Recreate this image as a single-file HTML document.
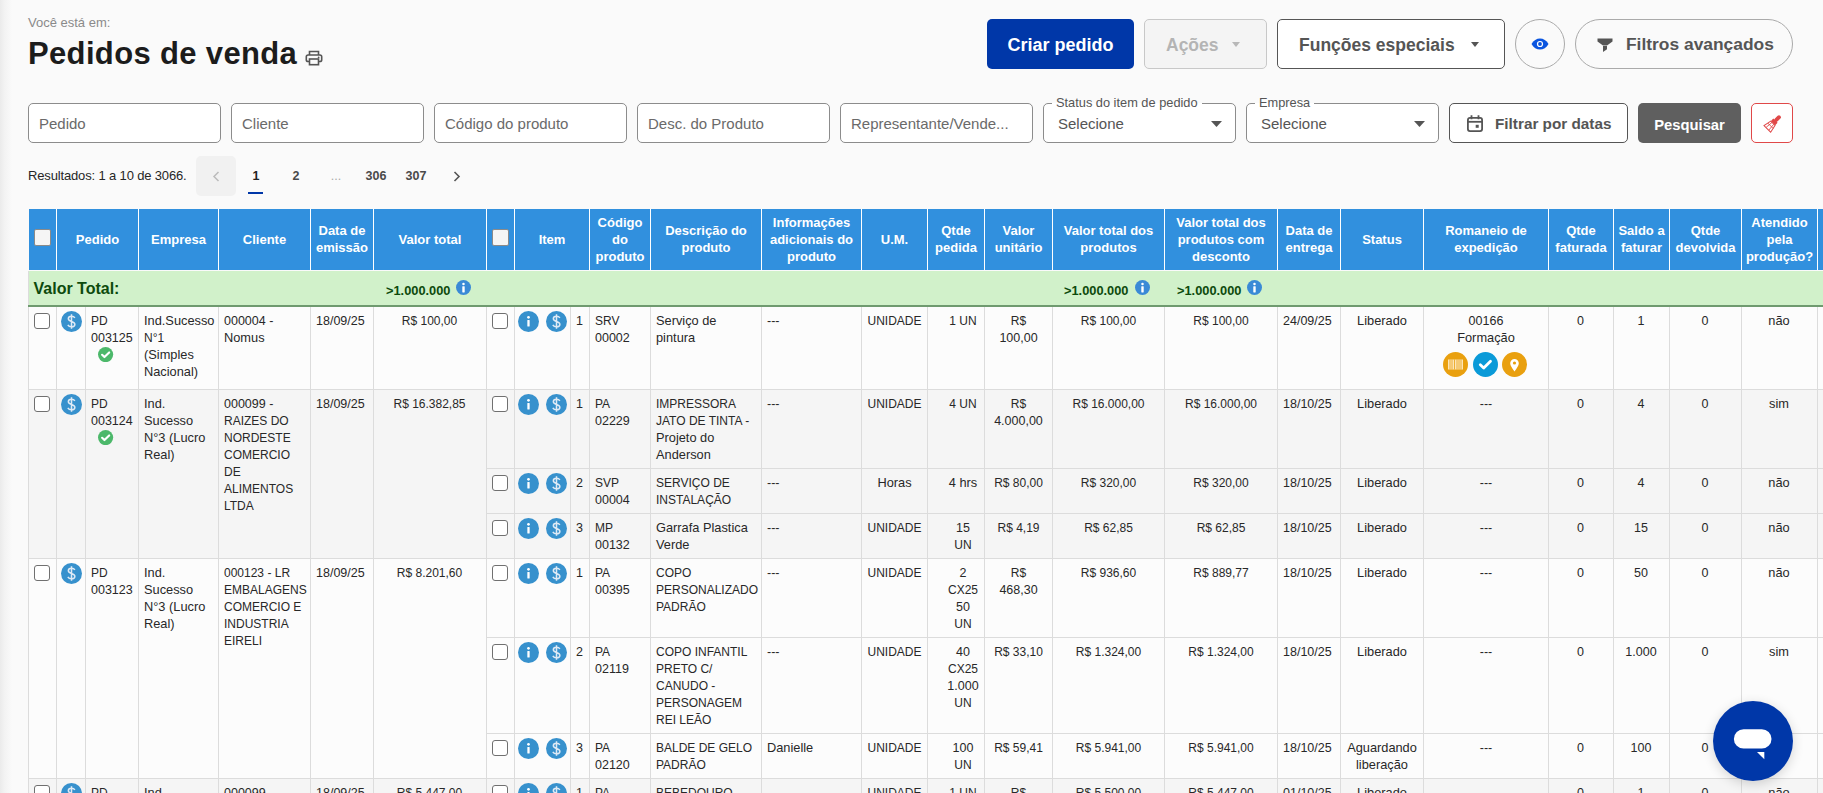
<!DOCTYPE html><html lang="pt"><head><meta charset="utf-8"><title>Pedidos de venda</title><style>
*{box-sizing:border-box}
html,body{margin:0;padding:0}
body{width:1823px;height:793px;overflow:hidden;background:#fafafa;font-family:"Liberation Sans",sans-serif;color:#333;position:relative}
.a{position:absolute}
.t{position:absolute;white-space:nowrap;font-size:12.5px;line-height:17px;color:#282828}
.u{font-size:12px}
.l{font-size:12.8px;position:relative;top:-1px}
.c{text-align:center}
.hd{position:absolute;white-space:nowrap;font-size:13px;line-height:17px;color:#fff;font-weight:bold;text-align:center;display:flex;align-items:center;justify-content:center;top:208.8px;height:61px}
.vl{position:absolute;width:1px;background:#dcdcdc}
.hl{position:absolute;height:1px;background:#dcdcdc}
.cb{position:absolute;width:16px;height:16px;border:1.5px solid #707070;border-radius:3px;background:#fff}
.btn{position:absolute;border-radius:5px;font-weight:bold;white-space:nowrap;display:flex;align-items:center}
.inp{position:absolute;top:103px;height:40px;border:1px solid #8c8c8c;border-radius:5px;background:#fff;font-size:15px;color:#6a6a6a;padding-left:10px;padding-top:0;display:flex;align-items:center;white-space:nowrap}
.pg{position:absolute;top:156px;width:40px;height:40px;display:flex;align-items:center;justify-content:center;font-size:12.5px;font-weight:bold;color:#4a4a4a}
</style></head><body>
<div class="a" style="left:0;top:0;width:12px;height:793px;background:linear-gradient(to right,#ebebeb,#f3f3f3 40%,#fafafa)"></div>
<div class="t" style="left:28px;top:15px;font-size:13px;line-height:16px;color:#8a8a8a">Você está em:</div>
<div class="t" style="left:28px;top:36px;font-size:31px;line-height:36px;color:#1c1c1c;font-weight:bold;letter-spacing:0.35px">Pedidos de venda</div>
<svg class="a" style="left:305px;top:50px" width="18" height="16" viewBox="0 0 18 16"><path d="M4.5 5V1.5h9V5" fill="none" stroke="#555" stroke-width="1.6"/><rect x="1.3" y="5" width="15.4" height="6.5" rx="1.8" fill="none" stroke="#555" stroke-width="1.6"/><rect x="4.5" y="9" width="9" height="5.7" fill="#fafafa" stroke="#555" stroke-width="1.6"/><circle cx="13.6" cy="7.4" r="0.9" fill="#555"/></svg>
<div class="btn" style="left:987px;top:19px;width:147px;height:50px;background:#0037a8;color:#fff;font-size:18px;justify-content:center;padding-top:2px">Criar pedido</div>
<div class="btn" style="left:1144px;top:19px;width:123px;height:50px;background:#f4f4f4;border:1px solid #c8c8c8;color:#b4b4b4;font-size:17.5px;padding-left:21px;padding-top:2px">Ações<svg style="margin-left:13px;margin-top:-2px" width="8" height="5" viewBox="0 0 8 5"><path d="M0 0h8L4 5z" fill="#b8b8b8"/></svg></div>
<div class="btn" style="left:1277px;top:19px;width:228px;height:50px;background:#fff;border:1.5px solid #555;color:#555;font-size:17.5px;padding-left:21px;padding-top:2px">Funções especiais<svg style="margin-left:16px;margin-top:-2px" width="8" height="5" viewBox="0 0 8 5"><path d="M0 0h8L4 5z" fill="#555"/></svg></div>
<div class="a" style="left:1515px;top:19px;width:50px;height:50px;border:1px solid #aaa;border-radius:50%;background:#fafafa"></div>
<svg class="a" style="left:1531px;top:38px" width="18" height="12" viewBox="0 0 18 12"><path d="M0.5 6C2.6 2.2 5.6 0.4 9 0.4S15.4 2.2 17.5 6C15.4 9.8 12.4 11.6 9 11.6S2.6 9.8 0.5 6z" fill="#0a55e0"/><circle cx="9" cy="6" r="3.1" fill="#fff"/><circle cx="9" cy="6" r="1.9" fill="#0a55e0"/></svg>
<div class="btn" style="left:1575px;top:19px;width:218px;height:50px;background:#fafafa;border:1px solid #aaa;border-radius:25px;color:#555;font-size:17.4px;padding-left:50px;padding-top:1px">Filtros avançados</div>
<svg class="a" style="left:1597px;top:38px" width="16" height="14" viewBox="0 0 16 14"><path d="M0.5 0.5h15v3L10 7.5v0H6v0L0.5 3.5z" fill="#555"/><path d="M6 8h4v3.2L6 14z" fill="#555"/></svg>
<div class="inp" style="left:28px;width:193px">Pedido</div>
<div class="inp" style="left:231px;width:193px">Cliente</div>
<div class="inp" style="left:434px;width:193px">Código do produto</div>
<div class="inp" style="left:637px;width:193px">Desc. do Produto</div>
<div class="inp" style="left:840px;width:193px">Representante/Vende...</div>
<div class="inp" style="left:1043px;width:193px;color:#555;padding-left:14px">Selecione<svg class="a" style="left:167px;top:17px" width="11" height="6" viewBox="0 0 11 6"><path d="M0 0h11L5.5 6z" fill="#555"/></svg></div>
<div class="t" style="left:1052px;top:94.8px;font-size:12.8px;line-height:15px;color:#555;background:linear-gradient(#fafafa 0,#fafafa 8.5px,#fff 8.5px);padding:0 4px">Status do item de pedido</div>
<div class="inp" style="left:1246px;width:193px;color:#555;padding-left:14px">Selecione<svg class="a" style="left:167px;top:17px" width="11" height="6" viewBox="0 0 11 6"><path d="M0 0h11L5.5 6z" fill="#555"/></svg></div>
<div class="t" style="left:1255px;top:94.8px;font-size:12.8px;line-height:15px;color:#555;background:linear-gradient(#fafafa 0,#fafafa 8.5px,#fff 8.5px);padding:0 4px">Empresa</div>
<div class="btn" style="left:1449px;top:103px;width:179px;height:40px;background:#fff;border:1.5px solid #555;color:#555;font-size:15.3px;padding-left:45px;padding-top:2px">Filtrar por datas</div>
<svg class="a" style="left:1467px;top:115px" width="16" height="17" viewBox="0 0 16 17"><rect x="0.9" y="2.9" width="14.2" height="13.2" rx="2" fill="none" stroke="#555" stroke-width="1.8"/><path d="M1 6.8h14" stroke="#555" stroke-width="1.8"/><path d="M4.5 0.3v4M11.5 0.3v4" stroke="#555" stroke-width="1.8"/><rect x="8.7" y="9.8" width="3" height="3" fill="#555"/></svg>
<div class="btn" style="left:1638px;top:103px;width:103px;height:40px;background:#5f5f5f;color:#fff;font-size:14.8px;justify-content:center;padding-top:4px">Pesquisar</div>
<div class="a" style="left:1751px;top:103px;width:42px;height:40px;border:1px solid #e04848;border-radius:5px;background:#fff"></div>
<svg class="a" style="left:1752px;top:104px" width="40" height="38" viewBox="0 0 40 38"><g transform="translate(20.6 19.6) rotate(45) scale(0.84)"><rect x="-2.3" y="-13" width="4.6" height="9" rx="2.2" fill="#e04848"/><rect x="-3.6" y="-5" width="7.2" height="4" rx="0.6" fill="#e04848"/><path d="M-3.6 -0.6h7.2l2 9.5h-11.2z" fill="none" stroke="#e04848" stroke-width="1.2"/><path d="M-1.5 -0.5l-0.8 9M1.5 -0.5l0.8 9M-4.6 3.6h9.2" stroke="#e04848" stroke-width="1"/></g></svg>
<div class="t" style="left:28px;top:167px;font-size:13px;line-height:17px;color:#262626;letter-spacing:-0.15px">Resultados: 1 a 10 de 3066.</div>
<div class="a" style="left:196px;top:156px;width:40px;height:40px;border-radius:5px;background:#f1f1f1"></div>
<svg class="a" style="left:212px;top:171px" width="8" height="11" viewBox="0 0 8 11"><path d="M6.5 1L2 5.5 6.5 10" fill="none" stroke="#bbb" stroke-width="1.5"/></svg>
<div class="pg" style="left:236px;color:#222">1</div>
<div class="pg" style="left:276px;color:#4a4a4a">2</div>
<div class="pg" style="left:356px;color:#4a4a4a">306</div>
<div class="pg" style="left:396px;color:#4a4a4a">307</div>
<div class="pg" style="left:316px;color:#aaa;font-weight:normal">...</div>
<div class="a" style="left:248px;top:192px;width:15px;height:2px;background:#0037a8"></div>
<svg class="a" style="left:453px;top:171px" width="8" height="11" viewBox="0 0 8 11"><path d="M1.5 1L6 5.5 1.5 10" fill="none" stroke="#555" stroke-width="1.6"/></svg>
<div class="a" style="left:29px;top:209px;width:1794px;height:61px;background:#3190de"></div>
<div class="a" style="left:56px;top:209px;width:1px;height:61px;background:#fff"></div>
<div class="a" style="left:138px;top:209px;width:1px;height:61px;background:#fff"></div>
<div class="a" style="left:218px;top:209px;width:1px;height:61px;background:#fff"></div>
<div class="a" style="left:310px;top:209px;width:1px;height:61px;background:#fff"></div>
<div class="a" style="left:373px;top:209px;width:1px;height:61px;background:#fff"></div>
<div class="a" style="left:486px;top:209px;width:1px;height:61px;background:#fff"></div>
<div class="a" style="left:514px;top:209px;width:1px;height:61px;background:#fff"></div>
<div class="a" style="left:589px;top:209px;width:1px;height:61px;background:#fff"></div>
<div class="a" style="left:650px;top:209px;width:1px;height:61px;background:#fff"></div>
<div class="a" style="left:761px;top:209px;width:1px;height:61px;background:#fff"></div>
<div class="a" style="left:861px;top:209px;width:1px;height:61px;background:#fff"></div>
<div class="a" style="left:927px;top:209px;width:1px;height:61px;background:#fff"></div>
<div class="a" style="left:984px;top:209px;width:1px;height:61px;background:#fff"></div>
<div class="a" style="left:1052px;top:209px;width:1px;height:61px;background:#fff"></div>
<div class="a" style="left:1164px;top:209px;width:1px;height:61px;background:#fff"></div>
<div class="a" style="left:1277px;top:209px;width:1px;height:61px;background:#fff"></div>
<div class="a" style="left:1340px;top:209px;width:1px;height:61px;background:#fff"></div>
<div class="a" style="left:1423px;top:209px;width:1px;height:61px;background:#fff"></div>
<div class="a" style="left:1548px;top:209px;width:1px;height:61px;background:#fff"></div>
<div class="a" style="left:1613px;top:209px;width:1px;height:61px;background:#fff"></div>
<div class="a" style="left:1669px;top:209px;width:1px;height:61px;background:#fff"></div>
<div class="a" style="left:1741px;top:209px;width:1px;height:61px;background:#fff"></div>
<div class="a" style="left:1817px;top:209px;width:1px;height:61px;background:#fff"></div>
<div class="hd" style="left:57px;width:81px">Pedido</div>
<div class="hd" style="left:139px;width:79px">Empresa</div>
<div class="hd" style="left:219px;width:91px">Cliente</div>
<div class="hd" style="left:311px;width:62px">Data de<br>emissão</div>
<div class="hd" style="left:374px;width:112px">Valor total</div>
<div class="hd" style="left:515px;width:74px">Item</div>
<div class="hd" style="left:590px;width:60px">Código<br>do<br>produto</div>
<div class="hd" style="left:651px;width:110px">Descrição do<br>produto</div>
<div class="hd" style="left:762px;width:99px">Informações<br>adicionais do<br>produto</div>
<div class="hd" style="left:862px;width:65px">U.M.</div>
<div class="hd" style="left:928px;width:56px">Qtde<br>pedida</div>
<div class="hd" style="left:985px;width:67px">Valor<br>unitário</div>
<div class="hd" style="left:1053px;width:111px">Valor total dos<br>produtos</div>
<div class="hd" style="left:1165px;width:112px">Valor total dos<br>produtos com<br>desconto</div>
<div class="hd" style="left:1278px;width:62px">Data de<br>entrega</div>
<div class="hd" style="left:1341px;width:82px">Status</div>
<div class="hd" style="left:1424px;width:124px">Romaneio de<br>expedição</div>
<div class="hd" style="left:1549px;width:64px">Qtde<br>faturada</div>
<div class="hd" style="left:1614px;width:55px">Saldo a<br>faturar</div>
<div class="hd" style="left:1670px;width:71px">Qtde<br>devolvida</div>
<div class="hd" style="left:1742px;width:75px">Atendido<br>pela<br>produção?</div>
<div class="a" style="left:34px;top:229px;width:17px;height:17px;border:1.5px solid #8a8a8a;border-radius:2px;background:#f5f5f5"></div>
<div class="a" style="left:492px;top:229px;width:17px;height:17px;border:1.5px solid #8a8a8a;border-radius:2px;background:#f5f5f5"></div>
<div class="a" style="left:28px;top:271px;width:1795px;height:34px;background:#d1f1ca"></div>
<div class="a" style="left:28px;top:271px;width:1px;height:34px;background:#dcdcdc"></div>
<div class="a" style="left:28px;top:305px;width:1795px;height:2px;background:#6f9a6f"></div>
<div class="t" style="left:33.5px;top:280px;font-size:16px;line-height:18px;color:#0d4a0d;font-weight:bold">Valor Total:</div>
<div class="t" style="left:386px;top:282px;font-weight:bold;color:#0d4a0d;font-size:12.8px">&gt;1.000.000</div>
<svg class="a" style="left:456.0px;top:280.0px" width="15.0" height="15.0" viewBox="0 0 20 20"><circle cx="10" cy="10" r="10" fill="#3a8ad6"/><circle cx="10" cy="5.2" r="1.7" fill="#fff"/><rect x="8.4" y="8.2" width="3.2" height="8.3" rx="0.6" fill="#fff"/></svg>
<div class="t" style="left:1064px;top:282px;font-weight:bold;color:#0d4a0d;font-size:12.8px">&gt;1.000.000</div>
<svg class="a" style="left:1134.5px;top:280.0px" width="15.0" height="15.0" viewBox="0 0 20 20"><circle cx="10" cy="10" r="10" fill="#3a8ad6"/><circle cx="10" cy="5.2" r="1.7" fill="#fff"/><rect x="8.4" y="8.2" width="3.2" height="8.3" rx="0.6" fill="#fff"/></svg>
<div class="t" style="left:1177px;top:282px;font-weight:bold;color:#0d4a0d;font-size:12.8px">&gt;1.000.000</div>
<svg class="a" style="left:1246.5px;top:280.0px" width="15.0" height="15.0" viewBox="0 0 20 20"><circle cx="10" cy="10" r="10" fill="#3a8ad6"/><circle cx="10" cy="5.2" r="1.7" fill="#fff"/><rect x="8.4" y="8.2" width="3.2" height="8.3" rx="0.6" fill="#fff"/></svg>
<div class="a" style="left:28px;top:307px;width:1795px;height:82px;background:#fcfcfc"></div>
<div class="cb" style="left:34px;top:313px"></div>
<svg class="a" style="left:60.5px;top:310.5px" width="21.0" height="21.0" viewBox="0 0 20 20"><circle cx="10" cy="10" r="10" fill="#3791cd"/><path d="M13.2 6.6c-0.6-1-1.7-1.5-3.2-1.5-1.8 0-3 0.9-3 2.3 0 1.5 1.3 2 3 2.5s3.2 1 3.2 2.7c0 1.5-1.3 2.5-3.2 2.5-1.6 0-2.8-0.6-3.5-1.8M10 3.2v13.6" fill="none" stroke="#dfeaf5" stroke-width="1.45"/></svg>
<div class="t" style="left:91px;top:313px;"><div class="u">PD</div><div>003125</div></div>
<svg class="a" style="left:98.4px;top:347.1px" width="15.2" height="15.2" viewBox="0 0 20 20"><circle cx="10" cy="10" r="10" fill="#4cb86a"/><path d="M5.4 10.3l3.1 3 6.2-6.2" fill="none" stroke="#fff" stroke-width="2.8" stroke-linecap="round" stroke-linejoin="round"/></svg>
<div class="t" style="left:144px;top:313px;"><div class="l">Ind.Sucesso</div><div class="u">N°1</div><div class="l">(Simples</div><div class="l">Nacional)</div></div>
<div class="t" style="left:224px;top:313px;"><div>000004 -</div><div class="l">Nomus</div></div>
<div class="t" style="left:316px;top:313px;"><div>18/09/25</div></div>
<div class="t c" style="left:359.5px;top:313px;width:140px;"><div class="u">R$ 100,00</div></div>
<div class="cb" style="left:492px;top:313px"></div>
<svg class="a" style="left:518.2px;top:310.5px" width="21.0" height="21.0" viewBox="0 0 20 20"><circle cx="10" cy="10" r="10" fill="#3791cd"/><circle cx="10" cy="6" r="1.3" fill="#fff"/><rect x="8.9" y="8.6" width="2.2" height="6.2" rx="0.5" fill="#fff"/></svg>
<svg class="a" style="left:545.7px;top:310.5px" width="21.0" height="21.0" viewBox="0 0 20 20"><circle cx="10" cy="10" r="10" fill="#3791cd"/><path d="M13.2 6.6c-0.6-1-1.7-1.5-3.2-1.5-1.8 0-3 0.9-3 2.3 0 1.5 1.3 2 3 2.5s3.2 1 3.2 2.7c0 1.5-1.3 2.5-3.2 2.5-1.6 0-2.8-0.6-3.5-1.8M10 3.2v13.6" fill="none" stroke="#dfeaf5" stroke-width="1.45"/></svg>
<div class="t c" style="left:570.0px;top:313px;width:19px;"><div>1</div></div>
<div class="t" style="left:595px;top:313px;"><div class="u">SRV</div><div>00002</div></div>
<div class="t" style="left:656px;top:313px;"><div class="l">Serviço de</div><div class="l">pintura</div></div>
<div class="t" style="left:767px;top:313px;"><div>---</div></div>
<div class="t c" style="left:824.5px;top:313px;width:140px;"><div class="u">UNIDADE</div></div>
<div class="t c" style="left:933.0px;top:313px;width:60px;"><div class="u">1 UN</div></div>
<div class="t c" style="left:948.5px;top:313px;width:140px;"><div class="u">R$</div><div>100,00</div></div>
<div class="t c" style="left:1038.5px;top:313px;width:140px;"><div class="u">R$ 100,00</div></div>
<div class="t c" style="left:1151.0px;top:313px;width:140px;"><div class="u">R$ 100,00</div></div>
<div class="t" style="left:1283px;top:313px;"><div>24/09/25</div></div>
<div class="t c" style="left:1312.0px;top:313px;width:140px;"><div class="l">Liberado</div></div>
<div class="t c" style="left:1416.0px;top:313px;width:140px;"><div>00166</div><div class="l">Formação</div></div>
<svg class="a" style="left:1442.8px;top:351.9px" width="25" height="25" viewBox="0 0 25 25"><circle cx="12.5" cy="12.5" r="12.5" fill="#e9a00f"/><rect x="5" y="7.5" width="15" height="10" fill="#fde6b8"/><path d="M7 7.5v10M9 7.5v10M11.5 7.5v10M14 7.5v10M16 7.5v10M18 7.5v10" stroke="#e9a00f" stroke-width="0.8"/></svg>
<svg class="a" style="left:1472.9px;top:351.9px" width="25" height="25" viewBox="0 0 25 25"><circle cx="12.5" cy="12.5" r="12.5" fill="#0a9ad8"/><path d="M7.3 12.8l3.4 3.3 6.8-6.9" fill="none" stroke="#fff" stroke-width="2.8" stroke-linecap="round" stroke-linejoin="round"/></svg>
<svg class="a" style="left:1501.9px;top:351.9px" width="25" height="25" viewBox="0 0 25 25"><circle cx="12.5" cy="12.5" r="12.5" fill="#e9a00f"/><path d="M12.5 19.5c-2.6-3.6-4.3-6-4.3-8.2a4.3 4.3 0 0 1 8.6 0c0 2.2-1.7 4.6-4.3 8.2z" fill="#fff"/><circle cx="12.5" cy="11" r="1.6" fill="#e9a00f"/></svg>
<div class="t c" style="left:1550.5px;top:313px;width:60px;"><div>0</div></div>
<div class="t c" style="left:1613.0px;top:313px;width:56px;"><div>1</div></div>
<div class="t c" style="left:1670.0px;top:313px;width:70px;"><div>0</div></div>
<div class="t c" style="left:1741.0px;top:313px;width:76px;"><div class="l">não</div></div>
<div class="hl" style="left:28px;top:389px;width:1795px"></div>
<div class="a" style="left:28px;top:390px;width:1795px;height:168px;background:#f5f5f5"></div>
<div class="cb" style="left:34px;top:396px"></div>
<svg class="a" style="left:60.5px;top:393.5px" width="21.0" height="21.0" viewBox="0 0 20 20"><circle cx="10" cy="10" r="10" fill="#3791cd"/><path d="M13.2 6.6c-0.6-1-1.7-1.5-3.2-1.5-1.8 0-3 0.9-3 2.3 0 1.5 1.3 2 3 2.5s3.2 1 3.2 2.7c0 1.5-1.3 2.5-3.2 2.5-1.6 0-2.8-0.6-3.5-1.8M10 3.2v13.6" fill="none" stroke="#dfeaf5" stroke-width="1.45"/></svg>
<div class="t" style="left:91px;top:396px;"><div class="u">PD</div><div>003124</div></div>
<svg class="a" style="left:98.4px;top:430.1px" width="15.2" height="15.2" viewBox="0 0 20 20"><circle cx="10" cy="10" r="10" fill="#4cb86a"/><path d="M5.4 10.3l3.1 3 6.2-6.2" fill="none" stroke="#fff" stroke-width="2.8" stroke-linecap="round" stroke-linejoin="round"/></svg>
<div class="t" style="left:144px;top:396px;"><div class="l">Ind.</div><div class="l">Sucesso</div><div class="l">N°3 (Lucro</div><div class="l">Real)</div></div>
<div class="t" style="left:224px;top:396px;"><div>000099 -</div><div class="u">RAIZES DO</div><div class="u">NORDESTE</div><div class="u">COMERCIO</div><div class="u">DE</div><div class="u">ALIMENTOS</div><div class="u">LTDA</div></div>
<div class="t" style="left:316px;top:396px;"><div>18/09/25</div></div>
<div class="t c" style="left:359.5px;top:396px;width:140px;"><div class="u">R$ 16.382,85</div></div>
<div class="cb" style="left:492px;top:396px"></div>
<svg class="a" style="left:518.2px;top:393.5px" width="21.0" height="21.0" viewBox="0 0 20 20"><circle cx="10" cy="10" r="10" fill="#3791cd"/><circle cx="10" cy="6" r="1.3" fill="#fff"/><rect x="8.9" y="8.6" width="2.2" height="6.2" rx="0.5" fill="#fff"/></svg>
<svg class="a" style="left:545.7px;top:393.5px" width="21.0" height="21.0" viewBox="0 0 20 20"><circle cx="10" cy="10" r="10" fill="#3791cd"/><path d="M13.2 6.6c-0.6-1-1.7-1.5-3.2-1.5-1.8 0-3 0.9-3 2.3 0 1.5 1.3 2 3 2.5s3.2 1 3.2 2.7c0 1.5-1.3 2.5-3.2 2.5-1.6 0-2.8-0.6-3.5-1.8M10 3.2v13.6" fill="none" stroke="#dfeaf5" stroke-width="1.45"/></svg>
<div class="t c" style="left:570.0px;top:396px;width:19px;"><div>1</div></div>
<div class="t" style="left:595px;top:396px;"><div class="u">PA</div><div>02229</div></div>
<div class="t" style="left:656px;top:396px;"><div class="u">IMPRESSORA</div><div class="u">JATO DE TINTA -</div><div class="l">Projeto do</div><div class="l">Anderson</div></div>
<div class="t" style="left:767px;top:396px;"><div>---</div></div>
<div class="t c" style="left:824.5px;top:396px;width:140px;"><div class="u">UNIDADE</div></div>
<div class="t c" style="left:933.0px;top:396px;width:60px;"><div class="u">4 UN</div></div>
<div class="t c" style="left:948.5px;top:396px;width:140px;"><div class="u">R$</div><div>4.000,00</div></div>
<div class="t c" style="left:1038.5px;top:396px;width:140px;"><div class="u">R$ 16.000,00</div></div>
<div class="t c" style="left:1151.0px;top:396px;width:140px;"><div class="u">R$ 16.000,00</div></div>
<div class="t" style="left:1283px;top:396px;"><div>18/10/25</div></div>
<div class="t c" style="left:1312.0px;top:396px;width:140px;"><div class="l">Liberado</div></div>
<div class="t c" style="left:1416.0px;top:396px;width:140px;"><div>---</div></div>
<div class="t c" style="left:1550.5px;top:396px;width:60px;"><div>0</div></div>
<div class="t c" style="left:1613.0px;top:396px;width:56px;"><div>4</div></div>
<div class="t c" style="left:1670.0px;top:396px;width:70px;"><div>0</div></div>
<div class="t c" style="left:1741.0px;top:396px;width:76px;"><div class="l">sim</div></div>
<div class="hl" style="left:486px;top:468px;width:1337px"></div>
<div class="cb" style="left:492px;top:475px"></div>
<svg class="a" style="left:518.2px;top:472.5px" width="21.0" height="21.0" viewBox="0 0 20 20"><circle cx="10" cy="10" r="10" fill="#3791cd"/><circle cx="10" cy="6" r="1.3" fill="#fff"/><rect x="8.9" y="8.6" width="2.2" height="6.2" rx="0.5" fill="#fff"/></svg>
<svg class="a" style="left:545.7px;top:472.5px" width="21.0" height="21.0" viewBox="0 0 20 20"><circle cx="10" cy="10" r="10" fill="#3791cd"/><path d="M13.2 6.6c-0.6-1-1.7-1.5-3.2-1.5-1.8 0-3 0.9-3 2.3 0 1.5 1.3 2 3 2.5s3.2 1 3.2 2.7c0 1.5-1.3 2.5-3.2 2.5-1.6 0-2.8-0.6-3.5-1.8M10 3.2v13.6" fill="none" stroke="#dfeaf5" stroke-width="1.45"/></svg>
<div class="t c" style="left:570.0px;top:475px;width:19px;"><div>2</div></div>
<div class="t" style="left:595px;top:475px;"><div class="u">SVP</div><div>00004</div></div>
<div class="t" style="left:656px;top:475px;"><div class="u">SERVIÇO DE</div><div class="u">INSTALAÇÃO</div></div>
<div class="t" style="left:767px;top:475px;"><div>---</div></div>
<div class="t c" style="left:824.5px;top:475px;width:140px;"><div class="l">Horas</div></div>
<div class="t c" style="left:933.0px;top:475px;width:60px;"><div class="l">4 hrs</div></div>
<div class="t c" style="left:948.5px;top:475px;width:140px;"><div class="u">R$ 80,00</div></div>
<div class="t c" style="left:1038.5px;top:475px;width:140px;"><div class="u">R$ 320,00</div></div>
<div class="t c" style="left:1151.0px;top:475px;width:140px;"><div class="u">R$ 320,00</div></div>
<div class="t" style="left:1283px;top:475px;"><div>18/10/25</div></div>
<div class="t c" style="left:1312.0px;top:475px;width:140px;"><div class="l">Liberado</div></div>
<div class="t c" style="left:1416.0px;top:475px;width:140px;"><div>---</div></div>
<div class="t c" style="left:1550.5px;top:475px;width:60px;"><div>0</div></div>
<div class="t c" style="left:1613.0px;top:475px;width:56px;"><div>4</div></div>
<div class="t c" style="left:1670.0px;top:475px;width:70px;"><div>0</div></div>
<div class="t c" style="left:1741.0px;top:475px;width:76px;"><div class="l">não</div></div>
<div class="hl" style="left:486px;top:513px;width:1337px"></div>
<div class="cb" style="left:492px;top:520px"></div>
<svg class="a" style="left:518.2px;top:517.5px" width="21.0" height="21.0" viewBox="0 0 20 20"><circle cx="10" cy="10" r="10" fill="#3791cd"/><circle cx="10" cy="6" r="1.3" fill="#fff"/><rect x="8.9" y="8.6" width="2.2" height="6.2" rx="0.5" fill="#fff"/></svg>
<svg class="a" style="left:545.7px;top:517.5px" width="21.0" height="21.0" viewBox="0 0 20 20"><circle cx="10" cy="10" r="10" fill="#3791cd"/><path d="M13.2 6.6c-0.6-1-1.7-1.5-3.2-1.5-1.8 0-3 0.9-3 2.3 0 1.5 1.3 2 3 2.5s3.2 1 3.2 2.7c0 1.5-1.3 2.5-3.2 2.5-1.6 0-2.8-0.6-3.5-1.8M10 3.2v13.6" fill="none" stroke="#dfeaf5" stroke-width="1.45"/></svg>
<div class="t c" style="left:570.0px;top:520px;width:19px;"><div>3</div></div>
<div class="t" style="left:595px;top:520px;"><div class="u">MP</div><div>00132</div></div>
<div class="t" style="left:656px;top:520px;"><div class="l">Garrafa Plastica</div><div class="l">Verde</div></div>
<div class="t" style="left:767px;top:520px;"><div>---</div></div>
<div class="t c" style="left:824.5px;top:520px;width:140px;"><div class="u">UNIDADE</div></div>
<div class="t c" style="left:933.0px;top:520px;width:60px;"><div>15</div><div class="u">UN</div></div>
<div class="t c" style="left:948.5px;top:520px;width:140px;"><div class="u">R$ 4,19</div></div>
<div class="t c" style="left:1038.5px;top:520px;width:140px;"><div class="u">R$ 62,85</div></div>
<div class="t c" style="left:1151.0px;top:520px;width:140px;"><div class="u">R$ 62,85</div></div>
<div class="t" style="left:1283px;top:520px;"><div>18/10/25</div></div>
<div class="t c" style="left:1312.0px;top:520px;width:140px;"><div class="l">Liberado</div></div>
<div class="t c" style="left:1416.0px;top:520px;width:140px;"><div>---</div></div>
<div class="t c" style="left:1550.5px;top:520px;width:60px;"><div>0</div></div>
<div class="t c" style="left:1613.0px;top:520px;width:56px;"><div>15</div></div>
<div class="t c" style="left:1670.0px;top:520px;width:70px;"><div>0</div></div>
<div class="t c" style="left:1741.0px;top:520px;width:76px;"><div class="l">não</div></div>
<div class="hl" style="left:28px;top:558px;width:1795px"></div>
<div class="a" style="left:28px;top:559px;width:1795px;height:219px;background:#fcfcfc"></div>
<div class="cb" style="left:34px;top:565px"></div>
<svg class="a" style="left:60.5px;top:562.5px" width="21.0" height="21.0" viewBox="0 0 20 20"><circle cx="10" cy="10" r="10" fill="#3791cd"/><path d="M13.2 6.6c-0.6-1-1.7-1.5-3.2-1.5-1.8 0-3 0.9-3 2.3 0 1.5 1.3 2 3 2.5s3.2 1 3.2 2.7c0 1.5-1.3 2.5-3.2 2.5-1.6 0-2.8-0.6-3.5-1.8M10 3.2v13.6" fill="none" stroke="#dfeaf5" stroke-width="1.45"/></svg>
<div class="t" style="left:91px;top:565px;"><div class="u">PD</div><div>003123</div></div>
<div class="t" style="left:144px;top:565px;"><div class="l">Ind.</div><div class="l">Sucesso</div><div class="l">N°3 (Lucro</div><div class="l">Real)</div></div>
<div class="t" style="left:224px;top:565px;"><div class="u">000123 - LR</div><div class="u">EMBALAGENS</div><div class="u">COMERCIO E</div><div class="u">INDUSTRIA</div><div class="u">EIRELI</div></div>
<div class="t" style="left:316px;top:565px;"><div>18/09/25</div></div>
<div class="t c" style="left:359.5px;top:565px;width:140px;"><div class="u">R$ 8.201,60</div></div>
<div class="cb" style="left:492px;top:565px"></div>
<svg class="a" style="left:518.2px;top:562.5px" width="21.0" height="21.0" viewBox="0 0 20 20"><circle cx="10" cy="10" r="10" fill="#3791cd"/><circle cx="10" cy="6" r="1.3" fill="#fff"/><rect x="8.9" y="8.6" width="2.2" height="6.2" rx="0.5" fill="#fff"/></svg>
<svg class="a" style="left:545.7px;top:562.5px" width="21.0" height="21.0" viewBox="0 0 20 20"><circle cx="10" cy="10" r="10" fill="#3791cd"/><path d="M13.2 6.6c-0.6-1-1.7-1.5-3.2-1.5-1.8 0-3 0.9-3 2.3 0 1.5 1.3 2 3 2.5s3.2 1 3.2 2.7c0 1.5-1.3 2.5-3.2 2.5-1.6 0-2.8-0.6-3.5-1.8M10 3.2v13.6" fill="none" stroke="#dfeaf5" stroke-width="1.45"/></svg>
<div class="t c" style="left:570.0px;top:565px;width:19px;"><div>1</div></div>
<div class="t" style="left:595px;top:565px;"><div class="u">PA</div><div>00395</div></div>
<div class="t" style="left:656px;top:565px;"><div class="u">COPO</div><div class="u">PERSONALIZADO</div><div class="u">PADRÃO</div></div>
<div class="t" style="left:767px;top:565px;"><div>---</div></div>
<div class="t c" style="left:824.5px;top:565px;width:140px;"><div class="u">UNIDADE</div></div>
<div class="t c" style="left:933.0px;top:565px;width:60px;"><div>2</div><div class="u">CX25</div><div>50</div><div class="u">UN</div></div>
<div class="t c" style="left:948.5px;top:565px;width:140px;"><div class="u">R$</div><div>468,30</div></div>
<div class="t c" style="left:1038.5px;top:565px;width:140px;"><div class="u">R$ 936,60</div></div>
<div class="t c" style="left:1151.0px;top:565px;width:140px;"><div class="u">R$ 889,77</div></div>
<div class="t" style="left:1283px;top:565px;"><div>18/10/25</div></div>
<div class="t c" style="left:1312.0px;top:565px;width:140px;"><div class="l">Liberado</div></div>
<div class="t c" style="left:1416.0px;top:565px;width:140px;"><div>---</div></div>
<div class="t c" style="left:1550.5px;top:565px;width:60px;"><div>0</div></div>
<div class="t c" style="left:1613.0px;top:565px;width:56px;"><div>50</div></div>
<div class="t c" style="left:1670.0px;top:565px;width:70px;"><div>0</div></div>
<div class="t c" style="left:1741.0px;top:565px;width:76px;"><div class="l">não</div></div>
<div class="hl" style="left:486px;top:637px;width:1337px"></div>
<div class="cb" style="left:492px;top:644px"></div>
<svg class="a" style="left:518.2px;top:641.5px" width="21.0" height="21.0" viewBox="0 0 20 20"><circle cx="10" cy="10" r="10" fill="#3791cd"/><circle cx="10" cy="6" r="1.3" fill="#fff"/><rect x="8.9" y="8.6" width="2.2" height="6.2" rx="0.5" fill="#fff"/></svg>
<svg class="a" style="left:545.7px;top:641.5px" width="21.0" height="21.0" viewBox="0 0 20 20"><circle cx="10" cy="10" r="10" fill="#3791cd"/><path d="M13.2 6.6c-0.6-1-1.7-1.5-3.2-1.5-1.8 0-3 0.9-3 2.3 0 1.5 1.3 2 3 2.5s3.2 1 3.2 2.7c0 1.5-1.3 2.5-3.2 2.5-1.6 0-2.8-0.6-3.5-1.8M10 3.2v13.6" fill="none" stroke="#dfeaf5" stroke-width="1.45"/></svg>
<div class="t c" style="left:570.0px;top:644px;width:19px;"><div>2</div></div>
<div class="t" style="left:595px;top:644px;"><div class="u">PA</div><div>02119</div></div>
<div class="t" style="left:656px;top:644px;"><div class="u">COPO INFANTIL</div><div class="u">PRETO C/</div><div class="u">CANUDO -</div><div class="u">PERSONAGEM</div><div class="u">REI LEÃO</div></div>
<div class="t" style="left:767px;top:644px;"><div>---</div></div>
<div class="t c" style="left:824.5px;top:644px;width:140px;"><div class="u">UNIDADE</div></div>
<div class="t c" style="left:933.0px;top:644px;width:60px;"><div>40</div><div class="u">CX25</div><div>1.000</div><div class="u">UN</div></div>
<div class="t c" style="left:948.5px;top:644px;width:140px;"><div class="u">R$ 33,10</div></div>
<div class="t c" style="left:1038.5px;top:644px;width:140px;"><div class="u">R$ 1.324,00</div></div>
<div class="t c" style="left:1151.0px;top:644px;width:140px;"><div class="u">R$ 1.324,00</div></div>
<div class="t" style="left:1283px;top:644px;"><div>18/10/25</div></div>
<div class="t c" style="left:1312.0px;top:644px;width:140px;"><div class="l">Liberado</div></div>
<div class="t c" style="left:1416.0px;top:644px;width:140px;"><div>---</div></div>
<div class="t c" style="left:1550.5px;top:644px;width:60px;"><div>0</div></div>
<div class="t c" style="left:1613.0px;top:644px;width:56px;"><div>1.000</div></div>
<div class="t c" style="left:1670.0px;top:644px;width:70px;"><div>0</div></div>
<div class="t c" style="left:1741.0px;top:644px;width:76px;"><div class="l">sim</div></div>
<div class="hl" style="left:486px;top:733px;width:1337px"></div>
<div class="cb" style="left:492px;top:740px"></div>
<svg class="a" style="left:518.2px;top:737.5px" width="21.0" height="21.0" viewBox="0 0 20 20"><circle cx="10" cy="10" r="10" fill="#3791cd"/><circle cx="10" cy="6" r="1.3" fill="#fff"/><rect x="8.9" y="8.6" width="2.2" height="6.2" rx="0.5" fill="#fff"/></svg>
<svg class="a" style="left:545.7px;top:737.5px" width="21.0" height="21.0" viewBox="0 0 20 20"><circle cx="10" cy="10" r="10" fill="#3791cd"/><path d="M13.2 6.6c-0.6-1-1.7-1.5-3.2-1.5-1.8 0-3 0.9-3 2.3 0 1.5 1.3 2 3 2.5s3.2 1 3.2 2.7c0 1.5-1.3 2.5-3.2 2.5-1.6 0-2.8-0.6-3.5-1.8M10 3.2v13.6" fill="none" stroke="#dfeaf5" stroke-width="1.45"/></svg>
<div class="t c" style="left:570.0px;top:740px;width:19px;"><div>3</div></div>
<div class="t" style="left:595px;top:740px;"><div class="u">PA</div><div>02120</div></div>
<div class="t" style="left:656px;top:740px;"><div class="u">BALDE DE GELO</div><div class="u">PADRÃO</div></div>
<div class="t" style="left:767px;top:740px;"><div class="l">Danielle</div></div>
<div class="t c" style="left:824.5px;top:740px;width:140px;"><div class="u">UNIDADE</div></div>
<div class="t c" style="left:933.0px;top:740px;width:60px;"><div>100</div><div class="u">UN</div></div>
<div class="t c" style="left:948.5px;top:740px;width:140px;"><div class="u">R$ 59,41</div></div>
<div class="t c" style="left:1038.5px;top:740px;width:140px;"><div class="u">R$ 5.941,00</div></div>
<div class="t c" style="left:1151.0px;top:740px;width:140px;"><div class="u">R$ 5.941,00</div></div>
<div class="t" style="left:1283px;top:740px;"><div>18/10/25</div></div>
<div class="t c" style="left:1312.0px;top:740px;width:140px;"><div class="l">Aguardando</div><div class="l">liberação</div></div>
<div class="t c" style="left:1416.0px;top:740px;width:140px;"><div>---</div></div>
<div class="t c" style="left:1550.5px;top:740px;width:60px;"><div>0</div></div>
<div class="t c" style="left:1613.0px;top:740px;width:56px;"><div>100</div></div>
<div class="t c" style="left:1670.0px;top:740px;width:70px;"><div>0</div></div>
<div class="t c" style="left:1741.0px;top:740px;width:76px;"><div class="l">não</div></div>
<div class="hl" style="left:28px;top:778px;width:1795px"></div>
<div class="a" style="left:28px;top:779px;width:1795px;height:121px;background:#f5f5f5"></div>
<div class="cb" style="left:34px;top:785px"></div>
<svg class="a" style="left:60.5px;top:782.5px" width="21.0" height="21.0" viewBox="0 0 20 20"><circle cx="10" cy="10" r="10" fill="#3791cd"/><path d="M13.2 6.6c-0.6-1-1.7-1.5-3.2-1.5-1.8 0-3 0.9-3 2.3 0 1.5 1.3 2 3 2.5s3.2 1 3.2 2.7c0 1.5-1.3 2.5-3.2 2.5-1.6 0-2.8-0.6-3.5-1.8M10 3.2v13.6" fill="none" stroke="#dfeaf5" stroke-width="1.45"/></svg>
<div class="t" style="left:91px;top:785px;"><div class="u">PD</div><div>003122</div></div>
<div class="t" style="left:144px;top:785px;"><div class="l">Ind.</div><div class="l">Sucesso</div></div>
<div class="t" style="left:224px;top:785px;"><div>000099 -</div><div class="u">RAIZES DO</div></div>
<div class="t" style="left:316px;top:785px;"><div>18/09/25</div></div>
<div class="t c" style="left:359.5px;top:785px;width:140px;"><div class="u">R$ 5.447,00</div></div>
<div class="cb" style="left:492px;top:785px"></div>
<svg class="a" style="left:518.2px;top:782.5px" width="21.0" height="21.0" viewBox="0 0 20 20"><circle cx="10" cy="10" r="10" fill="#3791cd"/><circle cx="10" cy="6" r="1.3" fill="#fff"/><rect x="8.9" y="8.6" width="2.2" height="6.2" rx="0.5" fill="#fff"/></svg>
<svg class="a" style="left:545.7px;top:782.5px" width="21.0" height="21.0" viewBox="0 0 20 20"><circle cx="10" cy="10" r="10" fill="#3791cd"/><path d="M13.2 6.6c-0.6-1-1.7-1.5-3.2-1.5-1.8 0-3 0.9-3 2.3 0 1.5 1.3 2 3 2.5s3.2 1 3.2 2.7c0 1.5-1.3 2.5-3.2 2.5-1.6 0-2.8-0.6-3.5-1.8M10 3.2v13.6" fill="none" stroke="#dfeaf5" stroke-width="1.45"/></svg>
<div class="t c" style="left:570.0px;top:785px;width:19px;"><div>1</div></div>
<div class="t" style="left:595px;top:785px;"><div class="u">PA</div><div>02230</div></div>
<div class="t" style="left:656px;top:785px;"><div class="u">BEBEDOURO</div><div class="u">ELETRICO</div></div>
<div class="t" style="left:767px;top:785px;"><div></div></div>
<div class="t c" style="left:824.5px;top:785px;width:140px;"><div class="u">UNIDADE</div></div>
<div class="t c" style="left:933.0px;top:785px;width:60px;"><div class="u">1 UN</div></div>
<div class="t c" style="left:948.5px;top:785px;width:140px;"><div class="u">R$</div><div>5.500,00</div></div>
<div class="t c" style="left:1038.5px;top:785px;width:140px;"><div class="u">R$ 5.500,00</div></div>
<div class="t c" style="left:1151.0px;top:785px;width:140px;"><div class="u">R$ 5.447,00</div></div>
<div class="t" style="left:1283px;top:785px;"><div>01/10/25</div></div>
<div class="t c" style="left:1312.0px;top:785px;width:140px;"><div class="l">Liberado</div></div>
<div class="t c" style="left:1416.0px;top:785px;width:140px;"><div></div></div>
<div class="t c" style="left:1550.5px;top:785px;width:60px;"><div>0</div></div>
<div class="t c" style="left:1613.0px;top:785px;width:56px;"><div>1</div></div>
<div class="t c" style="left:1670.0px;top:785px;width:70px;"><div>0</div></div>
<div class="t c" style="left:1741.0px;top:785px;width:76px;"><div class="l">não</div></div>
<div class="vl" style="left:28px;top:307px;height:486px"></div>
<div class="vl" style="left:56px;top:307px;height:486px"></div>
<div class="vl" style="left:85px;top:307px;height:486px"></div>
<div class="vl" style="left:138px;top:307px;height:486px"></div>
<div class="vl" style="left:218px;top:307px;height:486px"></div>
<div class="vl" style="left:310px;top:307px;height:486px"></div>
<div class="vl" style="left:373px;top:307px;height:486px"></div>
<div class="vl" style="left:486px;top:307px;height:486px"></div>
<div class="vl" style="left:514px;top:307px;height:486px"></div>
<div class="vl" style="left:570px;top:307px;height:486px"></div>
<div class="vl" style="left:589px;top:307px;height:486px"></div>
<div class="vl" style="left:650px;top:307px;height:486px"></div>
<div class="vl" style="left:761px;top:307px;height:486px"></div>
<div class="vl" style="left:861px;top:307px;height:486px"></div>
<div class="vl" style="left:927px;top:307px;height:486px"></div>
<div class="vl" style="left:984px;top:307px;height:486px"></div>
<div class="vl" style="left:1052px;top:307px;height:486px"></div>
<div class="vl" style="left:1164px;top:307px;height:486px"></div>
<div class="vl" style="left:1277px;top:307px;height:486px"></div>
<div class="vl" style="left:1340px;top:307px;height:486px"></div>
<div class="vl" style="left:1423px;top:307px;height:486px"></div>
<div class="vl" style="left:1548px;top:307px;height:486px"></div>
<div class="vl" style="left:1613px;top:307px;height:486px"></div>
<div class="vl" style="left:1669px;top:307px;height:486px"></div>
<div class="vl" style="left:1741px;top:307px;height:486px"></div>
<div class="vl" style="left:1817px;top:307px;height:486px"></div>
<div class="a" style="left:1713px;top:701px;width:80px;height:80px;border-radius:50%;background:#0037a8;box-shadow:0 3px 12px rgba(0,0,0,0.16)"></div>
<svg class="a" style="left:1730px;top:725px" width="46" height="40" viewBox="0 0 46 40"><rect x="3.9" y="4.2" width="37.6" height="19.4" rx="9.7" fill="#fff"/><path d="M27 27h7.3v7.3z" fill="#fff"/></svg>
</body></html>
